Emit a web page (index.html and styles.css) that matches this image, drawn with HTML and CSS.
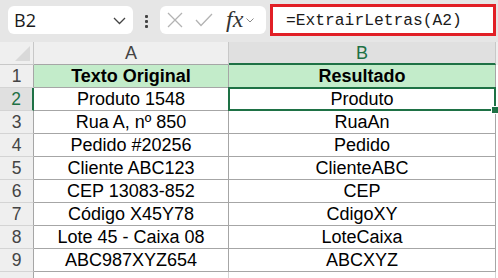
FILE: index.html
```html
<!DOCTYPE html>
<html lang="pt">
<head>
<meta charset="utf-8">
<title>ExtrairLetras</title>
<link rel="stylesheet" href="styles.css">
</head>
<body>
<div class="toolbar">
  <div class="namebox">
    <span class="ref">B2</span>
    <svg class="chev" width="13" height="8" viewBox="0 0 13 8"><polyline points="1,1 6.5,6.5 12,1" fill="none" stroke="#444" stroke-width="1.3"/></svg>
  </div>
  <div class="dots"><i></i><i></i><i></i></div>
  <div class="fxbox">
    <svg class="ic-x" width="16" height="16" viewBox="0 0 16 16"><path d="M1 1 L15 15 M15 1 L1 15" stroke="#b3b3b3" stroke-width="1.3" fill="none"/></svg>
    <svg class="ic-ok" width="18" height="14" viewBox="0 0 18 14"><polyline points="1,7 6,12.5 17,1" stroke="#b3b3b3" stroke-width="1.3" fill="none"/></svg>
    <span class="fx">fx</span>
    <svg class="chev-s" width="8" height="5" viewBox="0 0 8 5"><polyline points="0.5,0.5 4,4 7.5,0.5" fill="none" stroke="#888" stroke-width="1"/></svg>
  </div>
  <div class="formula">=ExtrairLetras(A2)</div>
</div>
<div class="sheet">
  <div class="corner"><span class="tri"></span></div>
  <div class="colhead">A</div>
  <div class="colhead active">B</div>
  <div class="edge head"></div>

  <div class="rowhead">1</div>
  <div class="cell title">Texto Original</div>
  <div class="cell title">Resultado</div>
  <div class="edge"></div>

  <div class="rowhead active">2</div>
  <div class="cell">Produto 1548</div>
  <div class="cell selected">Produto</div>
  <div class="edge"></div>

  <div class="rowhead">3</div>
  <div class="cell">Rua A, nº 850</div>
  <div class="cell">RuaAn</div>
  <div class="edge"></div>

  <div class="rowhead">4</div>
  <div class="cell">Pedido #20256</div>
  <div class="cell">Pedido</div>
  <div class="edge"></div>

  <div class="rowhead">5</div>
  <div class="cell">Cliente ABC123</div>
  <div class="cell">ClienteABC</div>
  <div class="edge"></div>

  <div class="rowhead">6</div>
  <div class="cell">CEP 13083-852</div>
  <div class="cell">CEP</div>
  <div class="edge"></div>

  <div class="rowhead">7</div>
  <div class="cell">Código X45Y78</div>
  <div class="cell">CdigoXY</div>
  <div class="edge"></div>

  <div class="rowhead">8</div>
  <div class="cell">Lote 45 - Caixa 08</div>
  <div class="cell">LoteCaixa</div>
  <div class="edge"></div>

  <div class="rowhead">9</div>
  <div class="cell">ABC987XYZ654</div>
  <div class="cell">ABCXYZ</div>
  <div class="edge"></div>

  <div class="rowhead blank"></div>
  <div class="cell blank"></div>
  <div class="cell blank"></div>
  <div class="edge"></div>
</div>
</body>
</html>
```
FILE: styles.css
```css
* { box-sizing: border-box; }
html, body { margin: 0; padding: 0; }
body {
  width: 498px;
  height: 278px;
  overflow: hidden;
  background: #ffffff;
  font-family: "Liberation Sans", Arial, sans-serif;
  color: #000;
}
.toolbar {
  height: 42px;
  background: #e6e6e6;
  display: flex;
  align-items: flex-start;
  padding-left: 8px;
}
.namebox {
  margin-top: 6px;
  width: 125px;
  height: 28px;
  background: #fff;
  border-radius: 6px;
  display: flex;
  align-items: center;
  justify-content: space-between;
  padding: 0 7px 0 6px;
}
.ref {
  font-size: 18px;
  color: #1a1a1a;
  font-family: "Open Sans", "Liberation Sans", sans-serif;
}
.chev { margin-top: 2px; }
.dots {
  width: 27px;
  height: 42px;
  display: flex;
  flex-direction: column;
  align-items: center;
  justify-content: center;
  gap: 2px;
}
.dots i {
  display: block;
  width: 3px;
  height: 3px;
  background: #444;
  border-radius: 1px;
}
.fxbox {
  margin-top: 6px;
  width: 106px;
  height: 28px;
  background: #fff;
  border-radius: 6px;
  display: flex;
  align-items: center;
  padding-left: 7px;
}
.ic-ok { margin-left: 12px; }
.fx {
  margin-left: 13px;
  font-family: "Liberation Serif", "Times New Roman", serif;
  font-style: italic;
  font-size: 24px;
  color: #333;
  line-height: 1;
  margin-top: -3px;
}
.chev-s { margin-left: 3px; }
.formula {
  margin-top: 4px;
  margin-left: 4px;
  width: 226px;
  height: 32px;
  border: 3px solid #e11f26;
  background: #fff;
  font-family: "Liberation Mono", "DejaVu Sans Mono", monospace;
  font-size: 16.3px;
  color: #1a1a1a;
  display: flex;
  align-items: center;
  padding-left: 13px;
}
.sheet {
  display: grid;
  grid-template-columns: 34px 195px 267px 2px;
  grid-template-rows: 23px repeat(9, 23px) 6px;
}
.corner, .colhead, .rowhead, .cell, .edge {
  border-right: 1px solid #a6a6a6;
  border-bottom: 1px solid #a6a6a6;
}
.corner {
  background: #efefef;
  position: relative;
  border-color: #c8c8c8;
}
.tri {
  position: absolute;
  right: 3px;
  bottom: 3px;
  width: 15px;
  height: 15px;
  background: #d9d9d9;
  clip-path: polygon(100% 0, 100% 100%, 0 100%);
}
.colhead {
  background: #efefef;
  border-right-color: #c8c8c8;
  border-bottom-color: #a6a6a6;
  font-size: 18px;
  color: #444;
  display: flex;
  align-items: center;
  justify-content: center;
  padding-top: 1px;
}
.colhead.active {
  background: #e0e0e0;
  color: #1e7145;
  border-bottom: 2px solid #1e7145;
}
.edge { border-right: none; border-bottom: none; background: #fff; }
.edge.head { background: #efefef; }
.rowhead {
  background: #efefef;
  border-right-color: #a6a6a6;
  border-bottom-color: #d4d4d4;
  font-size: 17.5px;
  color: #444;
  display: flex;
  align-items: center;
  justify-content: center;
}
.rowhead.active {
  background: #e0e0e0;
  color: #1e7145;
  border-right: 2px solid #1e7145;
}
.cell {
  font-size: 18px;
  display: flex;
  align-items: center;
  justify-content: center;
  white-space: nowrap;
}
.cell.title {
  background: #c3ecca;
  font-weight: bold;
}
.cell.selected { position: relative; }
.cell.selected::before {
  content: "";
  position: absolute;
  left: -1px;
  top: -1px;
  right: -1px;
  bottom: -1px;
  border: 2px solid #1e7145;
}
.cell.selected::after {
  content: "";
  position: absolute;
  right: -4px;
  bottom: -4px;
  width: 6px;
  height: 6px;
  background: #1e7145;
  border: 1px solid #fff;
}
.blank { border-bottom: none; }
.cell.blank { border-right-color: #d4d4d4; }
```
